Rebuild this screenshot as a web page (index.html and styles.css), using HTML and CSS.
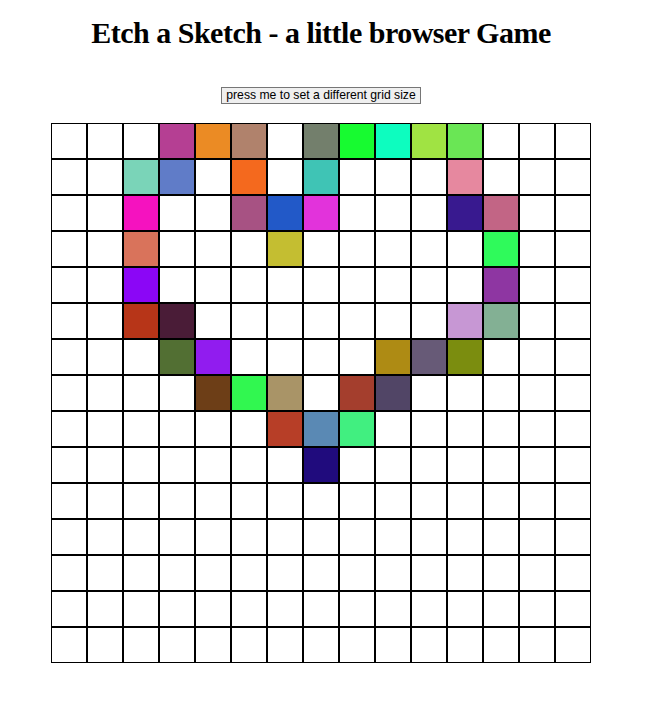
FILE: index.html
```html
<!DOCTYPE html>
<html lang="en">
<head>
<meta charset="utf-8">
<title>Etch a Sketch</title>
<link rel="stylesheet" href="styles.css">
</head>
<body>
<div class="page">
  <h1 class="title">Etch a Sketch - a little browser Game</h1>
  <button class="size-btn" type="button">press me to set a different grid size</button>
  <div class="grid">
    <div class="cell"></div><div class="cell"></div><div class="cell"></div><div class="cell" style="background:#b53f93"></div><div class="cell" style="background:#eb8b24"></div><div class="cell" style="background:#b0826c"></div><div class="cell"></div><div class="cell" style="background:#737f6c"></div><div class="cell" style="background:#17fb30"></div><div class="cell" style="background:#0dfdbf"></div><div class="cell" style="background:#a0e343"></div><div class="cell" style="background:#6ae655"></div><div class="cell"></div><div class="cell"></div><div class="cell"></div>
    <div class="cell"></div><div class="cell"></div><div class="cell" style="background:#7ad4b8"></div><div class="cell" style="background:#607cc8"></div><div class="cell"></div><div class="cell" style="background:#f4691e"></div><div class="cell"></div><div class="cell" style="background:#3fc4b5"></div><div class="cell"></div><div class="cell"></div><div class="cell"></div><div class="cell" style="background:#e6889f"></div><div class="cell"></div><div class="cell"></div><div class="cell"></div>
    <div class="cell"></div><div class="cell"></div><div class="cell" style="background:#f512bf"></div><div class="cell"></div><div class="cell"></div><div class="cell" style="background:#a75283"></div><div class="cell" style="background:#2259c8"></div><div class="cell" style="background:#e233db"></div><div class="cell"></div><div class="cell"></div><div class="cell"></div><div class="cell" style="background:#38198f"></div><div class="cell" style="background:#c26585"></div><div class="cell"></div><div class="cell"></div>
    <div class="cell"></div><div class="cell"></div><div class="cell" style="background:#d9735b"></div><div class="cell"></div><div class="cell"></div><div class="cell"></div><div class="cell" style="background:#c4be31"></div><div class="cell"></div><div class="cell"></div><div class="cell"></div><div class="cell"></div><div class="cell"></div><div class="cell" style="background:#2ffa5b"></div><div class="cell"></div><div class="cell"></div>
    <div class="cell"></div><div class="cell"></div><div class="cell" style="background:#8b06f6"></div><div class="cell"></div><div class="cell"></div><div class="cell"></div><div class="cell"></div><div class="cell"></div><div class="cell"></div><div class="cell"></div><div class="cell"></div><div class="cell"></div><div class="cell" style="background:#8e36a2"></div><div class="cell"></div><div class="cell"></div>
    <div class="cell"></div><div class="cell"></div><div class="cell" style="background:#b73518"></div><div class="cell" style="background:#4a1c37"></div><div class="cell"></div><div class="cell"></div><div class="cell"></div><div class="cell"></div><div class="cell"></div><div class="cell"></div><div class="cell"></div><div class="cell" style="background:#c797d4"></div><div class="cell" style="background:#83b094"></div><div class="cell"></div><div class="cell"></div>
    <div class="cell"></div><div class="cell"></div><div class="cell"></div><div class="cell" style="background:#526f33"></div><div class="cell" style="background:#911cef"></div><div class="cell"></div><div class="cell"></div><div class="cell"></div><div class="cell"></div><div class="cell" style="background:#ae8b14"></div><div class="cell" style="background:#675a77"></div><div class="cell" style="background:#7b8d0f"></div><div class="cell"></div><div class="cell"></div><div class="cell"></div>
    <div class="cell"></div><div class="cell"></div><div class="cell"></div><div class="cell"></div><div class="cell" style="background:#6d3e17"></div><div class="cell" style="background:#31f750"></div><div class="cell" style="background:#a99467"></div><div class="cell"></div><div class="cell" style="background:#a43e2d"></div><div class="cell" style="background:#514566"></div><div class="cell"></div><div class="cell"></div><div class="cell"></div><div class="cell"></div><div class="cell"></div>
    <div class="cell"></div><div class="cell"></div><div class="cell"></div><div class="cell"></div><div class="cell"></div><div class="cell"></div><div class="cell" style="background:#b73e27"></div><div class="cell" style="background:#5a89b4"></div><div class="cell" style="background:#41ef80"></div><div class="cell"></div><div class="cell"></div><div class="cell"></div><div class="cell"></div><div class="cell"></div><div class="cell"></div>
    <div class="cell"></div><div class="cell"></div><div class="cell"></div><div class="cell"></div><div class="cell"></div><div class="cell"></div><div class="cell"></div><div class="cell" style="background:#200b7d"></div><div class="cell"></div><div class="cell"></div><div class="cell"></div><div class="cell"></div><div class="cell"></div><div class="cell"></div><div class="cell"></div>
    <div class="cell"></div><div class="cell"></div><div class="cell"></div><div class="cell"></div><div class="cell"></div><div class="cell"></div><div class="cell"></div><div class="cell"></div><div class="cell"></div><div class="cell"></div><div class="cell"></div><div class="cell"></div><div class="cell"></div><div class="cell"></div><div class="cell"></div>
    <div class="cell"></div><div class="cell"></div><div class="cell"></div><div class="cell"></div><div class="cell"></div><div class="cell"></div><div class="cell"></div><div class="cell"></div><div class="cell"></div><div class="cell"></div><div class="cell"></div><div class="cell"></div><div class="cell"></div><div class="cell"></div><div class="cell"></div>
    <div class="cell"></div><div class="cell"></div><div class="cell"></div><div class="cell"></div><div class="cell"></div><div class="cell"></div><div class="cell"></div><div class="cell"></div><div class="cell"></div><div class="cell"></div><div class="cell"></div><div class="cell"></div><div class="cell"></div><div class="cell"></div><div class="cell"></div>
    <div class="cell"></div><div class="cell"></div><div class="cell"></div><div class="cell"></div><div class="cell"></div><div class="cell"></div><div class="cell"></div><div class="cell"></div><div class="cell"></div><div class="cell"></div><div class="cell"></div><div class="cell"></div><div class="cell"></div><div class="cell"></div><div class="cell"></div>
    <div class="cell"></div><div class="cell"></div><div class="cell"></div><div class="cell"></div><div class="cell"></div><div class="cell"></div><div class="cell"></div><div class="cell"></div><div class="cell"></div><div class="cell"></div><div class="cell"></div><div class="cell"></div><div class="cell"></div><div class="cell"></div><div class="cell"></div>
  </div>
</div>
</body>
</html>
```

FILE: styles.css
```css
html, body {
  background: #ffffff;
}

body {
  margin: 8px;
  font-family: "Liberation Serif", "Times New Roman", serif;
  color: #000000;
}

.page {
  width: 626px;
  display: flex;
  flex-direction: column;
  align-items: center;
}

.title {
  font-size: 30px;
  font-weight: bold;
  letter-spacing: -0.5px;
  line-height: 37px;
  margin: 6px 0 0 0;
  text-align: center;
  white-space: nowrap;
}

.size-btn {
  margin-top: 36px;
  width: 200px;
  height: 17px;
  padding: 0;
  font-family: "Liberation Sans", Arial, sans-serif;
  font-size: 12.2px;
  line-height: 15px;
  white-space: nowrap;
  color: #000000;
  background: #efefef;
  border: 1px solid #767676;
  border-radius: 0;
}

.grid {
  margin-top: 19px;
  display: grid;
  grid-template-columns: repeat(15, 36px);
  grid-auto-rows: 36px;
  width: 540px;
}

.cell {
  box-sizing: border-box;
  border: 1px solid #000000;
  background: #ffffff;
}
```
